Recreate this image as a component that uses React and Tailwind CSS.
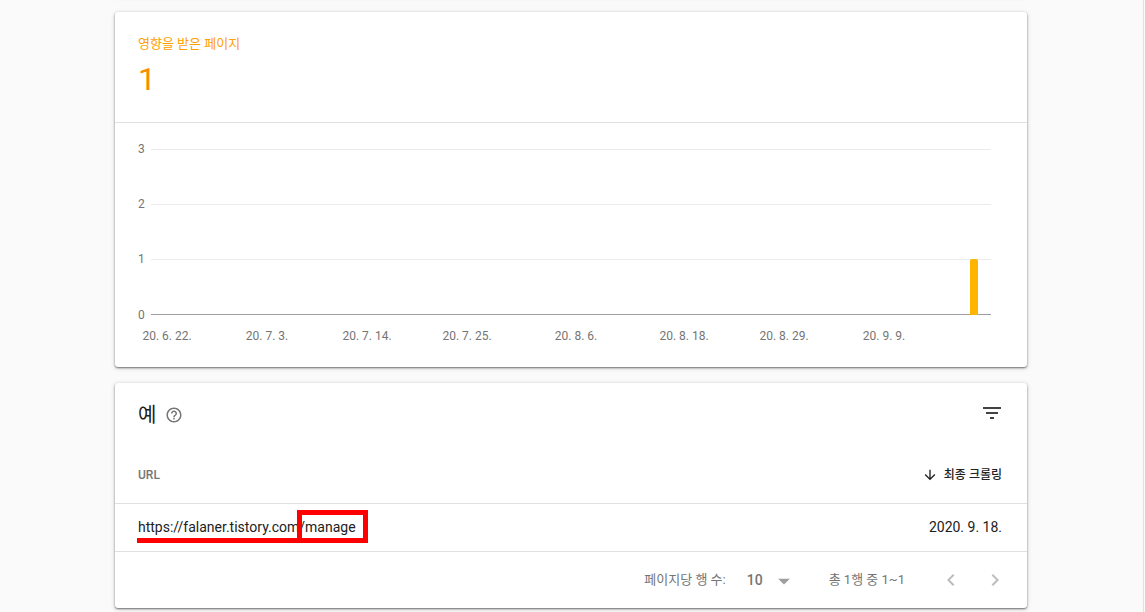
import { useState } from "react";
import {
  MdArrowDownward,
  MdArrowDropDown,
  MdChevronLeft,
  MdChevronRight,
  MdFilterList,
  MdHelpOutline,
} from "react-icons/md";

const gridLines = [
  { value: 3, y: 26 },
  { value: 2, y: 81 },
  { value: 1, y: 136 },
];

const dateLabels = [
  { label: "20. 6. 22.", x: 52 },
  { label: "20. 7. 3.", x: 152 },
  { label: "20. 7. 14.", x: 252 },
  { label: "20. 7. 25.", x: 352 },
  { label: "20. 8. 6.", x: 461 },
  { label: "20. 8. 18.", x: 569 },
  { label: "20. 8. 29.", x: 669 },
  { label: "20. 9. 9.", x: 769 },
];

const rows = [
  { host: "https://falaner.tistory.com", path: "/manage", date: "2020. 9. 18." },
];

function Card({ children }) {
  return (
    <section className="rounded-[3px] bg-white shadow-[0_1px_2px_rgba(0,0,0,0.5),0_1px_5px_rgba(0,0,0,0.16)]">
      {children}
    </section>
  );
}

function AffectedChart() {
  return (
    <svg viewBox="0 0 912 244" className="block w-full" role="img">
      <g className="fill-[#757575] text-[12px]">
        {gridLines.map((line) => (
          <g key={line.value}>
            <rect x="36" y={line.y} width="840" height="1" fill="#ebebeb" />
            <text x="23" y={line.y + 4}>
              {line.value}
            </text>
          </g>
        ))}
        <text x="23" y="196">
          0
        </text>
        {dateLabels.map((d) => (
          <text key={d.label} x={d.x} y="217" textAnchor="middle">
            {d.label}
          </text>
        ))}
      </g>
      <rect x="36" y="191" width="840" height="1" fill="#9e9e9e" />
      <path d="M855 192v-54q0-2 2-2h4q2 0 2 2v54z" fill="#ffb400" />
    </svg>
  );
}

function ExampleTable() {
  return (
    <table className="w-full border-collapse">
      <thead>
        <tr className="h-14 border-b border-[#e0e0e0] text-[12px] font-medium">
          <th className="pl-[23px] text-left font-medium text-[#757575]">
            URL
          </th>
          <th className="pr-[25px] font-medium">
            <button className="ml-auto flex items-center gap-1.5">
              <MdArrowDownward size={16} />
              최종 크롤링
            </button>
          </th>
        </tr>
      </thead>
      <tbody>
        {rows.map((row) => (
          <tr
            key={row.path}
            className="h-12 border-b border-[#e0e0e0] text-[14px]"
          >
            <td className="pl-[23px]">
              <a href="#manage" className="relative inline-block leading-5">
                {row.host}
                <span className="relative">
                  {row.path}
                  <span className="absolute -top-[9px] -right-3 -bottom-2 -left-0.5 border-[5px] border-[#ff0000]" />
                </span>
                <span className="absolute right-0 -bottom-[6px] -left-px h-[5px] bg-[#ff0000]" />
              </a>
            </td>
            <td className="pr-[25px] text-right">{row.date}</td>
          </tr>
        ))}
      </tbody>
    </table>
  );
}

function Pagination() {
  const [perPage, setPerPage] = useState("10");

  return (
    <footer className="flex h-14 items-center justify-end pr-5 text-[13px] text-[#757575]">
      <label htmlFor="perPage" className="mr-[21px]">
        페이지당 행 수:
      </label>
      <div className="relative mr-[34px]">
        <select
          id="perPage"
          value={perPage}
          onChange={(e) => setPerPage(e.target.value)}
          className="block w-12 appearance-none text-[14px] leading-5 font-medium"
        >
          <option value="10">10</option>
          <option value="25">25</option>
          <option value="50">50</option>
        </select>
        <MdArrowDropDown
          size={28}
          className="pointer-events-none absolute -top-[3px] -right-[3px] text-[#9e9e9e]"
        />
      </div>
      <span className="mr-[34px]">총 1행 중 1~1</span>
      <button aria-label="이전" className="mr-5 text-[#bdbdbd]">
        <MdChevronLeft size={24} />
      </button>
      <button aria-label="다음" className="text-[#bdbdbd]">
        <MdChevronRight size={24} />
      </button>
    </footer>
  );
}

export default function App() {
  return (
    <div className="min-h-screen bg-[#fafafa] pr-px font-['Roboto','Noto_Sans_CJK_KR',sans-serif] text-[#212121]">
      <main className="flex min-h-screen flex-col gap-4 overflow-hidden border-r border-[#e0e0e0] pr-[116px] pl-[115px]">
        {/* lower edge of the card above */}
        <div className="-mt-3 h-2 rounded-[3px] shadow-[0_1px_5px_rgba(0,0,0,0.16)]" />

        <Card>
          <header className="border-b border-[#e0e0e0] px-[23px] pt-[22px] pb-[23px] text-[#fb8c00]">
            <h2 className="text-[13px] leading-5 text-[#ffa000]">
              영향을 받은 페이지
            </h2>
            <p className="mt-[5px] text-[32px] leading-10">1</p>
          </header>
          <AffectedChart />
        </Card>

        <Card>
          <header className="flex h-16 items-center px-[23px]">
            <h2 className="text-[20px] leading-7">예</h2>
            <button aria-label="도움말" className="ml-[9px] text-[#757575]">
              <MdHelpOutline size={18} />
            </button>
            <button aria-label="필터" className="-mt-1 ml-auto text-[#424242]">
              <MdFilterList size={24} />
            </button>
          </header>
          <ExampleTable />
          <Pagination />
        </Card>
      </main>
    </div>
  );
}
